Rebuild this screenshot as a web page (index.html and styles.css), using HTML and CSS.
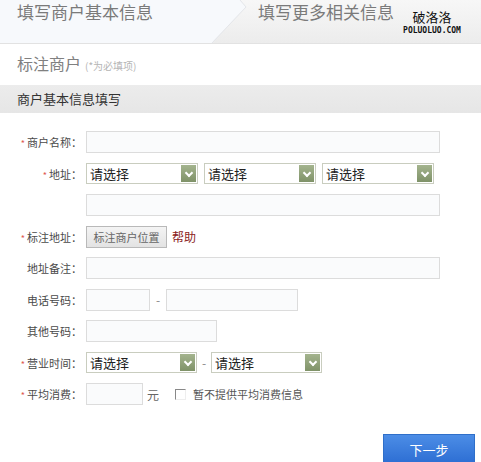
FILE: index.html
```html
<!DOCTYPE html>
<html lang="zh-CN">
<head>
    <meta charset="UTF-8">
    <title>标注商户</title>
    <link rel="stylesheet" href="styles.css">
</head>
<body>

<header class="steps">
    <svg class="step-shape" width="250" height="44" viewBox="0 0 250 44">
        <polygon points="0,0 240,0 246,7 212,43 0,43" fill="#f7f9fc"/>
        <polyline points="240,0 246,7 212,43" fill="none" stroke="#e4e6ea" stroke-width="1"/>
    </svg>
    <div class="step step-active">填写商户基本信息</div>
    <div class="step step-next">填写更多相关信息</div>
    <div class="mark">
        <div class="mark-cn">破洛洛</div>
        <div class="mark-en">POLUOLUO.COM</div>
    </div>
</header>

<section class="page-title">
    <h1>标注商户</h1>
    <span class="hint">(*为必填项)</span>
</section>

<div class="bar">商户基本信息填写</div>

<form class="form">
    <div class="row">
        <label class="label"><em>*</em>商户名称：</label>
        <input type="text" class="text w-full">
    </div>
    <div class="row">
        <label class="label"><em>*</em>地址：</label>
        <div class="select"><span>请选择</span><i class="arrow"></i></div>
        <div class="select"><span>请选择</span><i class="arrow"></i></div>
        <div class="select"><span>请选择</span><i class="arrow"></i></div>
    </div>
    <div class="row">
        <label class="label"></label>
        <input type="text" class="text w-full">
    </div>
    <div class="row">
        <label class="label"><em>*</em>标注地址：</label>
        <button type="button" class="btn-mark">标注商户位置</button>
        <a class="help">帮助</a>
    </div>
    <div class="row">
        <label class="label">地址备注：</label>
        <input type="text" class="text w-full">
    </div>
    <div class="row">
        <label class="label">电话号码：</label>
        <input type="text" class="text w-area">
        <span class="dash">-</span>
        <input type="text" class="text w-tel">
    </div>
    <div class="row">
        <label class="label">其他号码：</label>
        <input type="text" class="text w-other">
    </div>
    <div class="row">
        <label class="label"><em>*</em>营业时间：</label>
        <div class="select select-time"><span>请选择</span><i class="arrow"></i></div>
        <span class="dash dash-time">-</span>
        <div class="select select-time"><span>请选择</span><i class="arrow"></i></div>
    </div>
    <div class="row">
        <label class="label"><em>*</em>平均消费：</label>
        <input type="text" class="text w-price">
        <span class="unit">元</span>
        <span class="check"></span>
        <span class="check-text">暂不提供平均消费信息</span>
    </div>
    <div class="actions">
        <button type="button" class="btn-next">下一步</button>
    </div>
</form>

</body>
</html>
```

FILE: styles.css
```css
body {
    margin: 0;
    font-family: "Noto Sans CJK SC", "Noto Sans", sans-serif;
    background-color: #fff;
    color: #555;
}
.steps {
    position: relative;
    display: flex;
    height: 43px;
    border-bottom: 1px solid #e2e2e2;
    background: linear-gradient(#f7f7f7, #ececec);
}
.step-shape {
    position: absolute;
    left: 0;
    top: 0;
}
.step {
    position: relative;
    padding-top: 1px;
    font-size: 17px;
    line-height: 22px;
    color: #7a7a7a;
}
.step-active {
    padding-left: 17px;
    width: 241px;
}
.step-next {
    width: 143px;
}
.mark {
    position: relative;
    padding-top: 8px;
    text-align: center;
    width: 62px;
}
.mark-cn {
    font-size: 13px;
    line-height: 17px;
    color: #111;
}
.mark-en {
    margin-top: 1px;
    font-family: "DejaVu Sans Mono", monospace;
    font-size: 8px;
    font-weight: bold;
    line-height: 9px;
    color: #111;
}
.page-title {
    display: flex;
    align-items: baseline;
    height: 41px;
    padding-left: 17px;
}
.page-title h1 {
    margin: 9px 0 0;
    font-size: 16px;
    font-weight: normal;
    color: #808080;
    line-height: 20px;
}
.hint {
    margin-left: 4px;
    font-size: 10px;
    color: #b5b5b5;
}
.bar {
    height: 28px;
    line-height: 28px;
    padding-left: 17px;
    font-size: 13px;
    color: #333;
    background: linear-gradient(#ececec, #e6e6e6);
}
.form {
    display: flex;
    flex-direction: column;
    gap: 9.5px;
    padding-top: 18px;
}
.row {
    display: flex;
    align-items: center;
    height: 22px;
}
.label {
    width: 82px;
    margin-right: 4px;
    text-align: right;
    font-size: 11px;
    color: #4a4a4a;
}
.label em {
    font-style: normal;
    font-size: 9px;
    color: #e0584f;
    margin-right: 2px;
}
.text {
    box-sizing: border-box;
    height: 22px;
    margin: 0;
    border: 1px solid #dcdcdc;
    background-color: #fafbfc;
    padding: 0 4px;
}
.w-full { width: 354px; }
.w-area { width: 64px; }
.w-tel { width: 132px; }
.w-other { width: 131px; }
.w-price { width: 57px; }
.dash {
    width: 16px;
    text-align: center;
    font-size: 12px;
    color: #888;
}
.dash-time {
    width: 14px;
}
.select {
    box-sizing: border-box;
    display: flex;
    align-items: center;
    justify-content: space-between;
    width: 112px;
    height: 21px;
    margin-right: 6px;
    padding: 1px 1px 1px 3px;
    border: 1px solid #c9cdbf;
    background-color: #fff;
    font-size: 13px;
    color: #222;
}
.select-time {
    width: 111px;
    margin-right: 0;
}
.arrow {
    position: relative;
    width: 15px;
    height: 17px;
    background: linear-gradient(#a4b48e, #7f9268);
}
.arrow::after {
    content: "";
    position: absolute;
    left: 5px;
    top: 5px;
    width: 4px;
    height: 4px;
    border-right: 2px solid #fff;
    border-bottom: 2px solid #fff;
    transform: rotate(45deg);
}
.btn-mark {
    height: 22px;
    width: 81px;
    padding: 0;
    border: 1px solid #b9b9b9;
    background: linear-gradient(#f4f4f4, #e3e3e3);
    font-family: inherit;
    font-size: 11px;
    color: #666;
}
.help {
    margin-left: 5px;
    font-size: 12px;
    color: #8b1c1c;
}
.unit {
    margin-left: 4px;
    font-size: 12px;
    color: #666;
}
.check {
    box-sizing: border-box;
    width: 11px;
    height: 11px;
    margin-left: 16px;
    border-top: 1px solid #888;
    border-left: 1px solid #888;
    border-right: 1px solid #eee;
    border-bottom: 1px solid #eee;
}
.check-text {
    margin-left: 7px;
    font-size: 11px;
    color: #555;
}
.actions {
    display: flex;
    justify-content: flex-end;
    padding-right: 6px;
    margin-top: 19px;
}
.btn-next {
    width: 92px;
    height: 32px;
    border: 1px solid #2f6fc9;
    background: linear-gradient(#4c8de6, #2b6cd2);
    font-family: inherit;
    font-size: 13px;
    color: #fff;
}
```
